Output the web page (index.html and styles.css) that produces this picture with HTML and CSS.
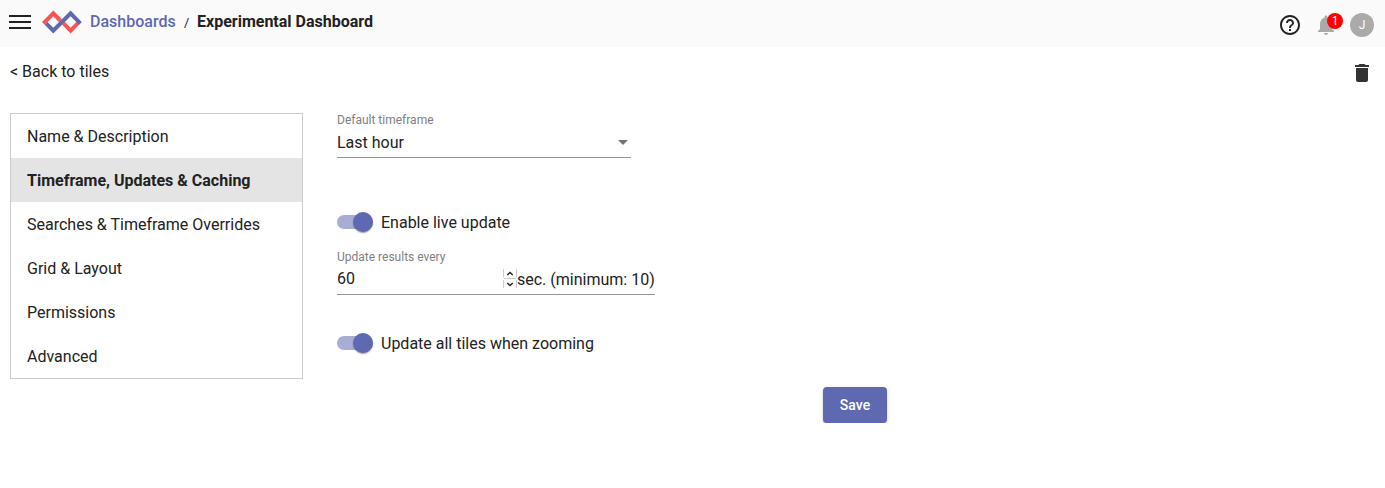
FILE: index.html
```html
<!DOCTYPE html>
<html lang="en">
<head>
<meta charset="utf-8">
<title>Experimental Dashboard</title>
<link rel="stylesheet" href="styles.css">
</head>
<body>
<header class="topbar">
  <svg class="menu-icon" width="22" height="14" viewBox="0 0 22 14"><path d="M0 1h22M0 7h22M0 13h22" stroke="#222" stroke-width="2"/></svg>
  <svg class="logo" width="40" height="24" viewBox="0 0 40 24">
    <path d="M0 12 11.300.5 20 9.300 17 12.300 11.300 6.300 5.400 12.300 2.700 14.800Z" fill="#f55653"/>
    <path d="M20 14.600 22.800 11.800 28.600 17.700 36.600 9.700 39.500 12.300 28.600 23.500Z" fill="#f55653"/>
    <path d="M2.700 14.800 5.500 12 11.300 17.700 28.600.5 39.700 12 37 14.800 28.600 6.300 11.300 23.500Z" fill="#5e69b1"/>
  </svg>
  <nav class="crumbs"><a class="crumb-link">Dashboards</a><span class="slash">/</span><span class="crumb-current">Experimental Dashboard</span></nav>
  <div class="actions">
    <svg width="24" height="24" viewBox="0 0 24 24" fill="#222"><path d="M11 18h2v-2h-2v2zm1-16C6.480 2 2 6.480 2 12s4.480 10 10 10 10-4.480 10-10S17.520 2 12 2zm0 18c-4.410 0-8-3.590-8-8s3.590-8 8-8 8 3.590 8 8-3.590 8-8 8zm0-14c-2.210 0-4 1.790-4 4h2c0-1.100.9-2 2-2s2 .9 2 2c0 2-3 1.750-3 5h2c0-2.250 3-2.500 3-5 0-2.210-1.790-4-4-4z"/></svg>
    <div class="bell">
      <svg width="24" height="24" viewBox="0 0 24 24" fill="#aaa"><path d="M12 22c1.100 0 2-.9 2-2h-4c0 1.100.9 2 2 2zm6-6v-5c0-3.070-1.640-5.640-4.500-6.320V4c0-.83-.67-1.500-1.500-1.500s-1.500.67-1.500 1.500v.68C7.630 5.360 6 7.920 6 11v5l-2 2v1h16v-1l-2-2z"/></svg>
      <span class="badge">1</span>
    </div>
    <div class="avatar">J</div>
  </div>
</header>
<div class="subbar">
  <a class="back">&lt; Back to tiles</a>
  <svg class="trash" width="24" height="24" viewBox="0 0 24 24" fill="#333"><path d="M6 19c0 1.100.9 2 2 2h8c1.100 0 2-.9 2-2V7H6v12zM19 4h-3.500l-1-1h-5l-1 1H5v2h14V4z"/></svg>
</div>
<main class="content">
  <nav class="tabs">
    <a class="tab">Name &amp; Description</a>
    <a class="tab active">Timeframe, Updates &amp; Caching</a>
    <a class="tab">Searches &amp; Timeframe Overrides</a>
    <a class="tab">Grid &amp; Layout</a>
    <a class="tab">Permissions</a>
    <a class="tab">Advanced</a>
  </nav>
  <form class="settings">
    <div class="field timeframe">
      <label class="label">Default timeframe</label>
      <div class="value"><span>Last hour</span><i class="caret"></i></div>
    </div>
    <div class="toggle live"><span class="switch"><i class="thumb"></i></span><span class="toggle-text">Enable live update</span></div>
    <div class="field interval">
      <label class="label">Update results every</label>
      <div class="value"><span class="number">60</span>
        <svg class="spinner" width="14" height="20" viewBox="0 0 14 20" fill="none"><path d="M.5 0v8.500M.5 11v8M13.500 0v8.500M13.500 11v8M1 9.500h12" stroke="#d0cbc7"/><path d="M4.300 6 7 3.500 9.700 6M4.300 14 7 16.500 9.700 14" stroke="#222" stroke-width="1.500"/></svg><span class="suffix">sec. (minimum: 10)</span></div>
    </div>
    <div class="toggle zooming"><span class="switch"><i class="thumb"></i></span><span class="toggle-text">Update all tiles when zooming</span></div>
    <button class="save" type="button">Save</button>
  </form>
</main>
</body>
</html>
```
FILE: styles.css
```css
* { box-sizing: border-box; }
body { margin: 0; background: #fff; color: #222; font: 16px/24px Roboto, sans-serif; }
svg { display: block; flex: none; }
.topbar { display: flex; align-items: flex-start; height: 47px; padding: 0 11px 0 9px; background: #fafafa; }
.menu-icon { margin-top: 15px; }
.logo { margin: 10px 8px 0 11px; }
.crumbs { display: flex; margin-top: 10px; }
.crumb-link { color: #5e69b1; font-weight: 500; width: 86px; }
.slash { width: 21px; padding: 1px 0 0 8px; font-size: 12.8px; }
.crumb-current { font-weight: 700; }
.actions { display: flex; margin: 13px 0 0 auto; gap: 12px; }
.bell { position: relative; }
.badge { position: absolute; left: 13px; top: 0; width: 16px; height: 16px; border-radius: 50%; background: #f00; color: #fff; font-size: 12px; line-height: 16px; text-align: center; }
.avatar { width: 24px; height: 24px; border-radius: 50%; background: #aaa; color: #fff; font-size: 12px; text-align: center; line-height: 25px; }
.subbar { display: flex; justify-content: space-between; padding: 13px 11px 0 10px; height: 66px; }
.trash { margin-top: 1px; }
.content { display: flex; padding-left: 10px; }
.tabs { width: 293px; height: 266px; border: 1px solid #ccc; }
.tab { display: block; height: 44px; padding: 0 16px; line-height: 45px; white-space: nowrap; }
.tab.active { background: #e4e4e4; font-weight: 700; }
.settings { display: flex; flex-direction: column; align-items: flex-start; width: 550px; margin-left: 34px; }
.field { border-bottom: 1px solid #949494; }
.label { display: block; color: #808080; font-size: 12px; line-height: 14px; }
.value { display: flex; white-space: nowrap; }
.timeframe { width: 294px; height: 45px; }
.timeframe .value { justify-content: space-between; margin-top: 4px; }
.caret { margin: 9px 3px 0 0; width: 10px; height: 5px; background: #757575; clip-path: polygon(0 0, 100% 0, 50% 100%); }
.toggle { display: flex; align-items: center; gap: 8px; height: 24px; }
.toggle-text { padding-top: 2px; }
.live { margin-top: 52px; }
.switch { display: flex; align-items: center; justify-content: flex-end; width: 36px; height: 14px; border-radius: 7px; background: #a7add4; }
.thumb { width: 20px; height: 20px; flex: none; border-radius: 50%; background: #5e69b1; box-shadow: 0 2px 1px -1px rgba(0,0,0,.2), 0 1px 1px rgba(0,0,0,.14), 0 1px 3px rgba(0,0,0,.12); }
.interval { width: 318px; height: 45px; margin-top: 16px; }
.interval .value { margin-top: 3px; }
.number { width: 166px; }
.spinner { margin-top: 2px; }
.suffix { margin-top: 1px; }
.zooming { margin-top: 36px; }
.save { align-self: flex-end; margin-top: 32px; width: 64px; height: 36px; padding: 0; border: 0; border-radius: 4px; background: #5e69b1; color: #fff; font: 500 14px/36px Roboto, sans-serif; box-shadow: 0 3px 1px -2px rgba(0,0,0,.2), 0 2px 2px rgba(0,0,0,.14), 0 1px 5px rgba(0,0,0,.12); }
```
